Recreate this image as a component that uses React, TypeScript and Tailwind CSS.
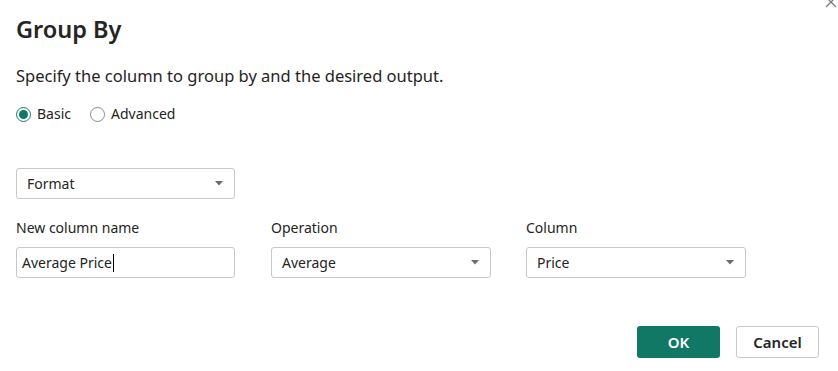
import React from "react";

function Caret() {
  return (
    <svg width="8" height="5" viewBox="0 0 8 5" className="shrink-0">
      <path d="M0 0 L8 0 L4 4.5 Z" fill="#6b6b6b" />
    </svg>
  );
}

function Select({ value, width }: { value: string; width: string }) {
  return (
    <div
      className={`flex h-[31px] ${width} items-center justify-between rounded-[3px] border border-[#c8c8c8] bg-white pl-[10px] pr-[11px] text-[14px] text-[#252423]`}
    >
      <span>{value}</span>
      <Caret />
    </div>
  );
}

function Field({
  label,
  children,
}: {
  label: string;
  children: React.ReactNode;
}) {
  return (
    <div className="flex flex-col">
      <div className="mb-[9px] text-[14px] leading-[20px] text-[#252423]">{label}</div>
      {children}
    </div>
  );
}

export default function App() {
  return (
    <div
      className="relative h-[371px] w-[838px] overflow-hidden bg-white pl-4 text-[#252423]"
      style={{ fontFamily: '"Noto Sans", "Open Sans", sans-serif' }}
    >
      {/* close glyph, cut off by the window edge */}
      <svg
        width="14"
        height="14"
        viewBox="0 0 14 14"
        className="absolute right-[0px] top-[-5px]"
      >
        <path d="M2 2 L12 12 M12 2 L2 12" stroke="#7a7a7a" strokeWidth="1.3" />
      </svg>

      <h1 className="pt-[12px] text-[23.5px] font-semibold leading-[34px] text-[#252423]">
        Group By
      </h1>

      <p className="mt-[19px] text-[16.5px] leading-[22px]">
        Specify the column to group by and the desired output.
      </p>

      <div className="mt-[17px] flex items-center text-[14px] leading-[20px]">
        <label className="flex items-center">
          <span className="flex h-[15px] w-[15px] items-center justify-center rounded-full border border-[#1a7a66]">
            <span className="h-[9px] w-[9px] rounded-full bg-[#117865]" />
          </span>
          <span className="ml-[6px]">Basic</span>
        </label>
        <label className="ml-[19px] flex items-center">
          <span className="h-[15px] w-[15px] rounded-full border border-[#8a8a8a]" />
          <span className="ml-[6px]">Advanced</span>
        </label>
      </div>

      <div className="mt-[44px]">
        <Select value="Format" width="w-[219px]" />
      </div>

      <div className="mt-[19px] flex">
        <Field label="New column name">
          <div className="flex h-[31px] w-[219px] items-center rounded-[3px] border border-[#c8c8c8] bg-white pl-[5px] text-[14px]">
            <span>Average Price</span>
            <span className="ml-[1px] h-[18px] w-px bg-black" />
          </div>
        </Field>
        <div className="ml-[36px]">
          <Field label="Operation">
            <Select value="Average" width="w-[220px]" />
          </Field>
        </div>
        <div className="ml-[35px]">
          <Field label="Column">
            <Select value="Price" width="w-[220px]" />
          </Field>
        </div>
      </div>

      <div className="mt-[48px] flex justify-end pr-[19px]">
        <button className="h-[32px] w-[83px] rounded-[3px] bg-[#117865] text-[15px] font-semibold text-white">
          OK
        </button>
        <button className="ml-[16px] h-[32px] w-[83px] rounded-[3px] border border-[#c8c8c8] bg-white text-[15px] font-semibold text-[#252423]">
          Cancel
        </button>
      </div>
    </div>
  );
}
